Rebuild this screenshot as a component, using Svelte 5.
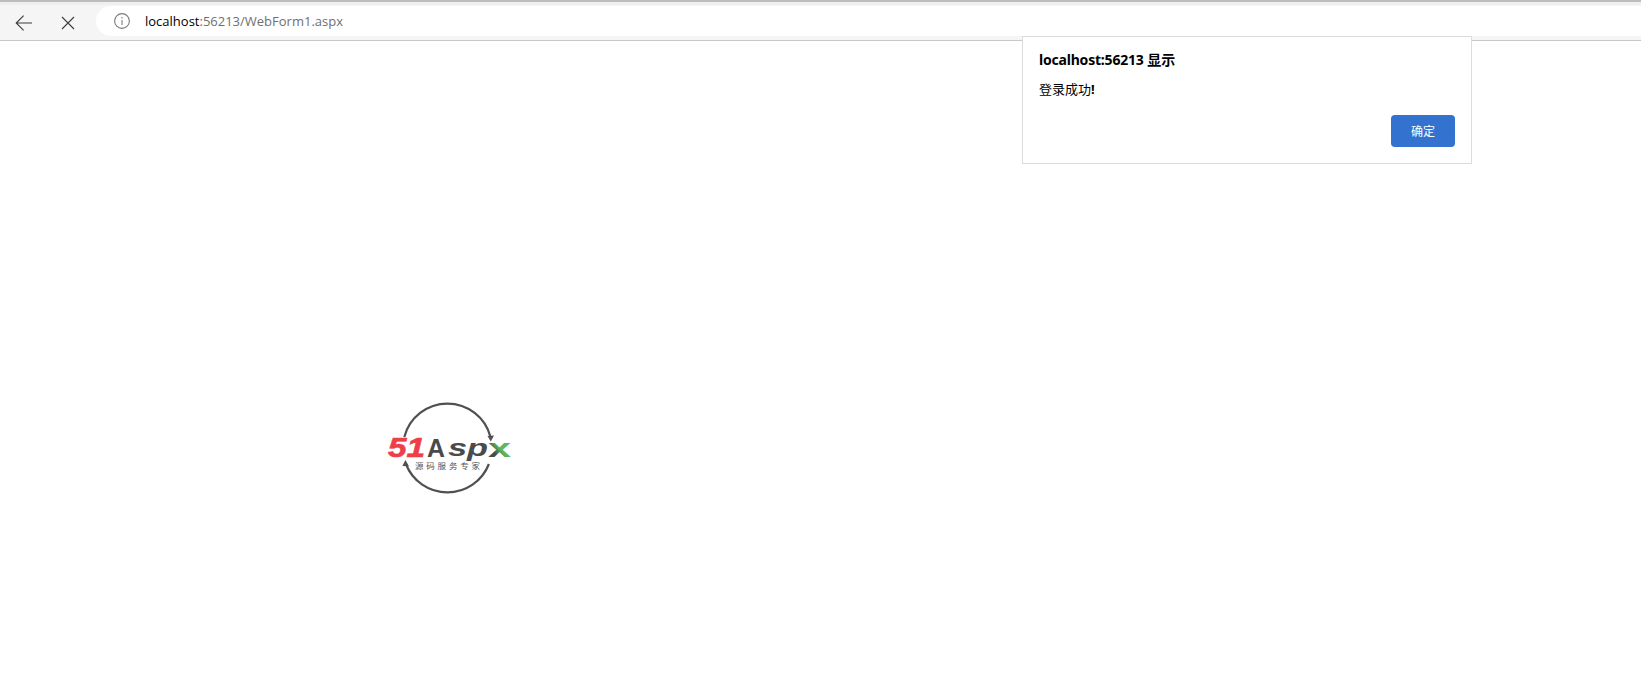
<script>
  const host = 'localhost';
  const rest = ':56213/WebForm1.aspx';
</script>

<div class="page">
  <header class="toolbar">
    <div class="navs">
      <button class="nav" aria-label="Back">
        <svg width="20" height="20" viewBox="0 0 20 20"><path d="M18 10H2.2M9.6 2.6 2.2 10l7.4 7.4" /></svg>
      </button>
      <button class="nav" aria-label="Stop">
        <svg width="14" height="14" viewBox="0 0 14 14"><path d="M1 1l12 12M13 1 1 13" /></svg>
      </button>
    </div>
    <div class="omnibox">
      <svg class="info" width="18" height="18" viewBox="0 0 18 18">
        <circle cx="9" cy="9" r="7.4" />
        <path d="M9 8v5M9 5v1.4" />
      </svg>
      <span class="url"><span class="host">{host}</span>{rest}</span>
    </div>
  </header>

  <main class="content">
    <svg class="logo" width="130" height="100" viewBox="0 -6 130 100">
      <defs>
        <linearGradient id="xfade" x1="0" y1="1" x2="1" y2="0">
          <stop offset="0.3" stop-color="#4a4a4a" />
          <stop offset="0.5" stop-color="#5cb85c" />
        </linearGradient>
      </defs>
      <g fill="none" stroke="#505050" stroke-width="2.2">
        <path d="M17.3 33A44.5 44.5 0 0 1 103.5 33" />
        <path d="M18.9 60A44.5 44.5 0 0 0 101.9 60" />
      </g>
      <path d="M103.8 37.5l-3.3-5.6 6.5-.4z" fill="#505050" />
      <path d="M18.4 56l-3 6 6.6.2z" fill="#505050" />
      <text x="1" y="53" class="brand red" textLength="37" lengthAdjust="spacingAndGlyphs">51</text>
      <text x="40" y="53" class="brand dark" textLength="18" lengthAdjust="spacingAndGlyphs">A</text>
      <text x="61" y="52" class="brand thin" textLength="40" lengthAdjust="spacingAndGlyphs">sp</text>
      <text x="101" y="53" class="brand cross" textLength="23" lengthAdjust="spacingAndGlyphs">x</text>
      <text x="28" y="65" class="slogan" textLength="65">源码服务专家</text>
    </svg>
  </main>

  <div class="dialog" role="alertdialog">
    <div class="title"><span class="tight">localhost:56213</span> 显示</div>
    <div class="message">登录成功<b>!</b></div>
    <div class="actions"><button class="ok">确定</button></div>
  </div>
</div>

<style>
  :global(body) {
    margin: 0;
    background: #fff;
  }
  .page {
    position: relative;
    height: 692px;
    overflow: hidden;
    font-family: "Noto Sans", "Noto Sans CJK SC", sans-serif;
    color: #000;
  }
  .toolbar {
    box-sizing: border-box;
    height: 41px;
    display: flex;
    align-items: flex-start;
    gap: 11px;
    padding: 6px 0 0 2px;
    background: #f5f5f5;
    border-top: 2px solid #bdbdbd;
    border-bottom: 1px solid #c8c8c8;
    box-shadow: inset 0 3px #efefef;
  }
  .navs {
    display: flex;
    flex: none;
    width: 83px;
    height: 29px;
  }
  .nav {
    flex: none;
    width: 44px;
    height: 29px;
    padding: 0;
    border: 0;
    background: none;
    display: flex;
    align-items: center;
    justify-content: center;
  }
  .nav svg path {
    fill: none;
    stroke: #3c3c3c;
    stroke-width: 1.1;
  }
  .omnibox {
    flex: 1;
    height: 30px;
    margin-top: -2px;
    display: flex;
    align-items: center;
    gap: 14px;
    padding-left: 17px;
    background: #fff;
    border-radius: 15px 0 0 15px;
  }
  .info {
    flex: none;
  }
  .info circle,
  .info path {
    fill: none;
    stroke: #7a7a7a;
    stroke-width: 1.1;
  }
  .url {
    font-family: "Open Sans", "Noto Sans", sans-serif;
    font-size: 13px;
    color: #707070;
  }
  .host {
    color: #000;
  }
  .content {
    padding: 357px 0 0 387px;
  }
  .logo {
    display: block;
  }
  .brand {
    font-family: "Liberation Sans", sans-serif;
    font-size: 25px;
    font-weight: 700;
  }
  .red {
    fill: #ee3e48;
    stroke: #ee3e48;
    stroke-width: 0.6;
    font-size: 27px;
    font-style: italic;
  }
  .dark {
    fill: #4a4a4a;
  }
  .thin {
    fill: #4a4a4a;
    font-size: 23px;
    font-style: italic;
  }
  .cross {
    fill: url(#xfade);
  }
  .slogan {
    font-family: "Noto Sans CJK SC", sans-serif;
    font-size: 8.5px;
    fill: #555;
  }
  .dialog {
    position: absolute;
    left: 1022px;
    top: 36px;
    box-sizing: border-box;
    width: 450px;
    height: 128px;
    padding: 14px 16px 16px 16px;
    background: #fff;
    border: 1px solid #dcdcdc;
    font-size: 13px;
  }
  .title {
    font-size: 14px;
    font-weight: 700;
    line-height: 18px;
  }
  .tight {
    letter-spacing: -0.2px;
  }
  .message {
    margin-top: 11px;
    line-height: 18px;
  }
  .actions {
    display: flex;
    justify-content: flex-end;
    margin-top: 17px;
  }
  .ok {
    width: 64px;
    height: 32px;
    padding: 0;
    border: 0;
    border-radius: 4px;
    background: #3373cf;
    color: #fff;
    font-family: inherit;
    font-size: 12px;
  }
</style>
